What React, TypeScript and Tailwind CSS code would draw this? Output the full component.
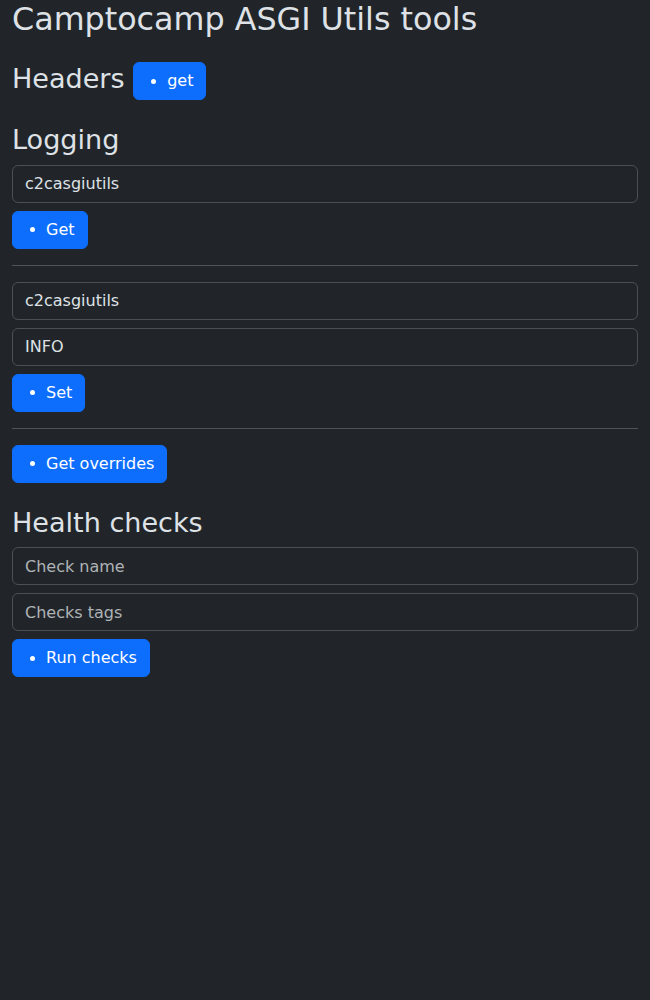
import type { ReactNode } from "react";

function Btn({ children }: { children: ReactNode }) {
  return (
    <button
      type="button"
      className="inline-flex h-[38px] shrink-0 items-center rounded-[6px] border border-[#0d6efd] bg-[#0d6efd] px-3 text-base leading-6 text-white"
    >
      <span className="ml-[5px] mr-[11px] inline-block h-[5px] w-[5px] rounded-full bg-white" />
      {children}
    </button>
  );
}

function Field({ value, placeholder }: { value?: string; placeholder?: string }) {
  return (
    <input
      type="text"
      defaultValue={value}
      placeholder={placeholder}
      className="block h-[38px] w-full rounded-[6px] border border-[#495057] bg-[#212529] px-3 py-[6px] text-base leading-6 text-[#dee2e6] outline-none placeholder:text-[#afb3b7]"
    />
  );
}

function Rule() {
  return <hr className="my-4 border-0 border-t border-[#505458]" />;
}

export default function App() {
  return (
    <div className="min-h-screen bg-[#212529] px-3 font-['DejaVu_Sans',sans-serif] text-base leading-6 text-[#dee2e6]">
      <h1 className="mb-6 text-[31.75px] font-normal leading-[1.2]">Camptocamp ASGI Utils tools</h1>

      <div className="flex items-start gap-[8.6px]">
        <h2 className="mt-[1px] text-[27.05px] font-normal leading-[1.2]">Headers</h2>
        <Btn>get</Btn>
      </div>

      <h2 className="mb-2 mt-6 text-[27.05px] font-normal leading-[1.2]">Logging</h2>
      <Field value="c2casgiutils" />
      <div className="mt-2">
        <Btn>Get</Btn>
      </div>
      <Rule />
      <Field value="c2casgiutils" />
      <div className="mt-2">
        <Field value="INFO" />
      </div>
      <div className="mt-2">
        <Btn>Set</Btn>
      </div>
      <Rule />
      <Btn>Get overrides</Btn>

      <h2 className="mb-2 mt-6 text-[27.05px] font-normal leading-[1.2]">Health checks</h2>
      <Field placeholder="Check name" />
      <div className="mt-2">
        <Field placeholder="Checks tags" />
      </div>
      <div className="mt-2">
        <Btn>Run checks</Btn>
      </div>
    </div>
  );
}
